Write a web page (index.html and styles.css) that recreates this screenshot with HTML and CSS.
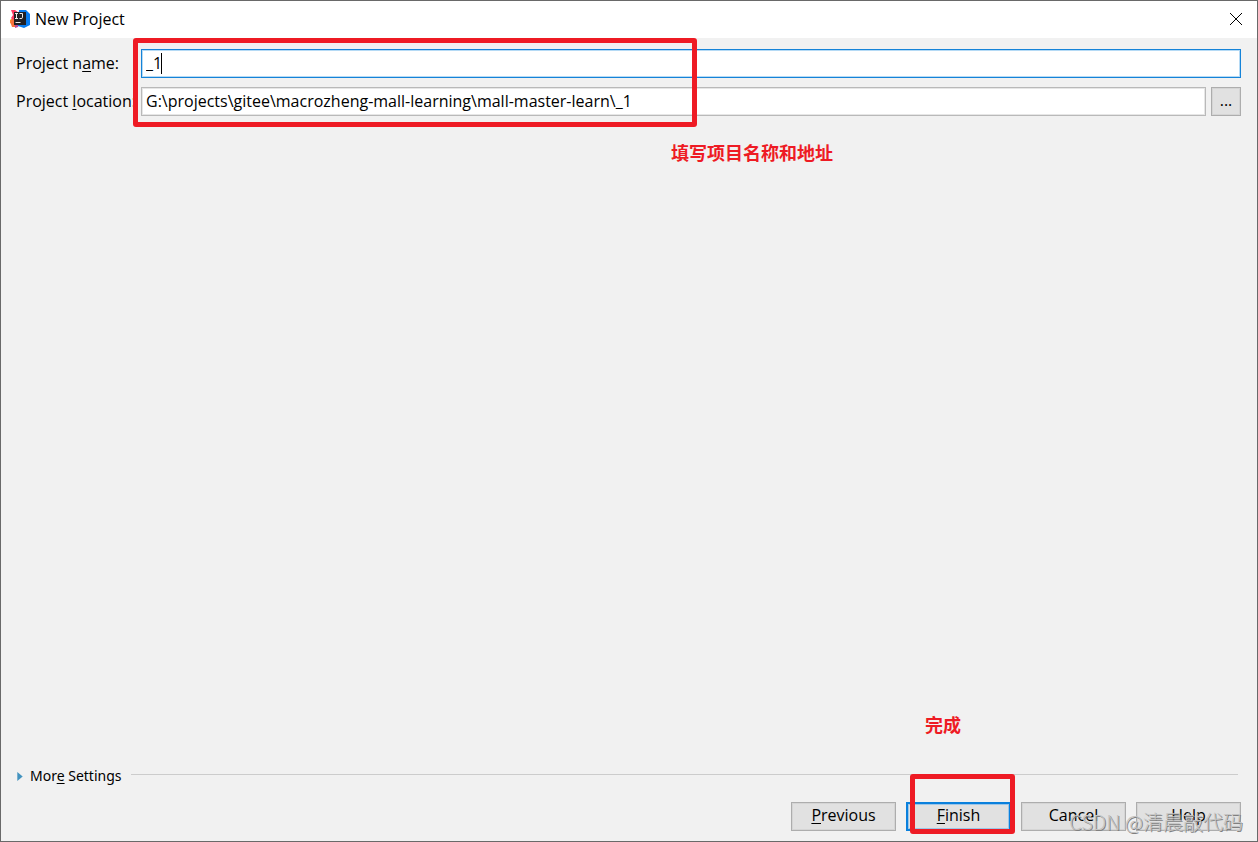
FILE: index.html
```html
<!DOCTYPE html>
<html lang="en">
<head>
<meta charset="utf-8">
<title>New Project</title>
<link rel="stylesheet" href="styles.css">
</head>
<body>
<div class="window">
  <header class="titlebar">
    <svg class="logo" viewBox="0 0 20 20" aria-hidden="true">
      <path fill="#f68a2f" d="M0 11 4 8l3 9-2 1-5-4z"/>
      <path fill="#fb3b62" d="M1 1l4 0 4 3-4 9-4-4 2-3z"/>
      <path fill="#f9713c" d="M1 12l5-3 1 9-5 0-1-3z"/>
      <path fill="#b84a9a" d="M5 14h5l-2 4-3 1z"/>
      <path fill="#087cf0" d="M9 1l7 0 4 4v11l-6 3-6-2z"/>
      <path fill="#202024" d="M4 3h12v13H4z"/>
      <path fill="none" stroke="#eee" stroke-width="1" d="M5 4.500h3M6.500 4.500v5M5 9.500h3M9.500 4.500h3v4q0 1-1.500 1H9.500M5.500 13.500h5"/>
    </svg>
    <h1 class="title">New Project</h1>
    <button class="close" type="button" aria-label="Close">
      <svg viewBox="0 0 12 12"><path d="M0 0 12 12M12 0 0 12"/></svg>
    </button>
  </header>

  <main class="content">
    <form class="form">
      <label class="label" for="name">Project n<u>a</u>me:</label>
      <div class="field">
        <input class="input active" id="name" type="text" value="_1">
        <span class="caret"></span>
      </div>
      <label class="label" for="location">Project <u>l</u>ocation:</label>
      <div class="field">
        <input class="input" id="location" type="text" value="G:\projects\gitee\macrozheng-mall-learning\mall-master-learn\_1">
        <button class="button browse" type="button">...</button>
      </div>
      <span class="mark mark-fields"></span>
      <strong class="note note-fields">填写项目名称和地址</strong>
    </form>

    <section class="more">
      <button class="more-toggle" type="button">
        <svg viewBox="0 0 6 10"><path d="M0 0 6 5 0 10z"/></svg>
        <span>Mor<u>e</u> Settings</span>
      </button>
      <span class="rule"></span>
    </section>
  </main>

  <footer class="actions">
    <button class="button" type="button"><u>P</u>revious</button>
    <div class="finish">
      <button class="button primary" type="button"><u>F</u>inish</button>
      <span class="mark mark-finish"></span>
      <strong class="note note-finish">完成</strong>
    </div>
    <button class="button" type="button">Cancel</button>
    <button class="button" type="button">Help</button>
    <span class="watermark">CSDN @清晨敲代码</span>
  </footer>
</div>
</body>
</html>
```

FILE: styles.css
```css
* {
  box-sizing: border-box;
}

body {
  margin: 0;
  color: #000;
  font: 16px/20px "Open Sans", "Noto Sans CJK SC", sans-serif;
}

button,
input {
  margin: 0;
  color: inherit;
  font: inherit;
}

u {
  text-decoration-thickness: 1px;
  text-underline-offset: 2px;
  text-decoration-skip-ink: none;
}

.window {
  display: flex;
  flex-direction: column;
  min-height: 100vh;
  border: 1px solid #696969;
  background: #f1f1f1;
}

.titlebar {
  display: flex;
  align-items: center;
  gap: 5px;
  height: 37px;
  padding: 0 15px 2px 9px;
  background: #fff;
}

.logo {
  width: 20px;
  height: 20px;
}

.title {
  flex: 1;
  margin: 0;
  font-size: 16px;
  font-weight: 400;
}

.close {
  display: flex;
  padding: 0;
  border: 0;
  background: none;
}

.close svg {
  width: 12px;
  height: 12px;
  overflow: visible;
  fill: none;
  stroke: #000;
}

.content {
  display: flex;
  flex: 1;
  flex-direction: column;
  justify-content: space-between;
  padding: 11px 16px 0 15px;
}

.form {
  position: relative;
  display: grid;
  grid-template-columns: 125px 1fr;
  row-gap: 9px;
  align-items: center;
  white-space: nowrap;
}

.label {
  padding-bottom: 2px;
}

.field {
  position: relative;
  display: flex;
  gap: 5px;
}

.input {
  flex: 1;
  min-width: 0;
  height: 29px;
  padding: 0 4px 2px;
  border: 1px solid #b9b9b9;
  outline: 0;
  background: #fff;
  box-shadow: inset 0 0 0 1px #e6e6e6;
}

.active {
  border-color: #1583d8;
  box-shadow: inset 0 0 0 1px #b5daf5;
}

.caret {
  position: absolute;
  top: 4px;
  left: 20px;
  width: 1px;
  height: 21px;
  background: #000;
}

.button {
  width: 105px;
  height: 29px;
  padding: 0 0 3px;
  border: 1px solid #adadad;
  background: #e1e1e1;
  box-shadow: inset 0 0 0 1px #d5d5d5;
}

.browse {
  width: 30px;
}

.primary {
  border: 2px solid #0a80dc;
  box-shadow: inset 0 0 0 1px #9cc6e8;
}

.mark {
  position: absolute;
  border: 5px solid #ee1b24;
  border-radius: 3px;
  pointer-events: none;
}

.mark-fields {
  top: -11px;
  left: 117px;
  width: 564px;
  height: 89px;
}

.mark-finish {
  top: -28px;
  left: 4px;
  width: 105px;
  height: 60px;
}

.note {
  position: absolute;
  color: #ee1b24;
  font: 700 18px/24px "Noto Sans CJK SC", sans-serif;
  white-space: nowrap;
}

.note-fields {
  top: 91px;
  left: 655px;
}

.note-finish {
  top: -90px;
  left: 19px;
}

.more {
  display: flex;
  align-items: center;
  gap: 9px;
  padding-right: 3px;
}

.more-toggle {
  display: flex;
  align-items: center;
  gap: 7px;
  padding: 0 0 0 1px;
  border: 0;
  background: none;
  font-family: "Noto Sans", sans-serif;
  font-size: 14px;
}

.more-toggle svg {
  width: 6px;
  height: 9px;
  fill: #4393bf;
}

.rule {
  flex: 1;
  height: 1px;
  margin-bottom: 3px;
  background: #ccc;
}

.actions {
  position: relative;
  display: flex;
  justify-content: flex-end;
  gap: 10px;
  padding: 16px 16px 10px;
}

.finish {
  position: relative;
}

.watermark {
  position: absolute;
  right: 14px;
  bottom: 6px;
  color: #c4c4c4;
  font: 300 20px/26px "Noto Sans CJK SC", sans-serif;
  text-shadow: 1px 1px 0 #808080;
  pointer-events: none;
}
```
